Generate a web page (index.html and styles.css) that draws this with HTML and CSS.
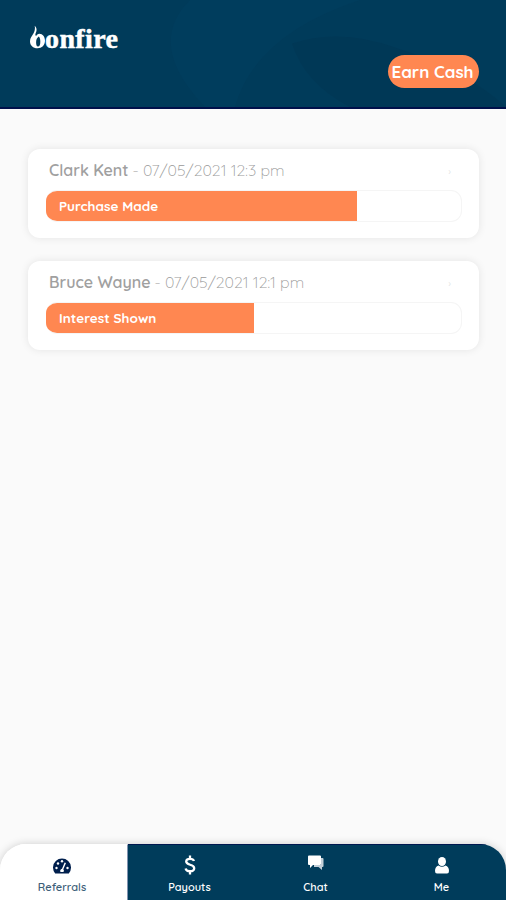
FILE: index.html
```html
<!DOCTYPE html>
<html lang="en">
<head>
  <meta charset="UTF-8">
  <meta name="viewport" content="width=device-width, initial-scale=1">
  <title>Bonfire</title>
  <link rel="stylesheet" href="styles.css">
</head>
<body>
  <header class="header">
    <svg class="header-shape" viewBox="0 0 506 108" preserveAspectRatio="none">
      <path class="shape-light" d="M190 0H360Q255 35 235 108H205Q145 45 190 0Z"/>
      <path class="shape-dark" d="M292 44Q340 28 395 48Q465 70 506 108H350Q305 85 292 44Z"/>
    </svg>
    <div class="logo">
      <svg class="logo-flame" viewBox="0 0 16 24">
        <path fill-rule="evenodd" d="M5 0C8 3 7 6 6 8C5.500 9.500 5.600 10.500 6.500 11C7 9.500 8.500 8.500 10 8.500C13.500 8.500 16 11.600 16 16C16 20.700 12.700 24 8 24C3.200 24 0 21 0 16.500C0 13 2 11 3.500 8.500C5 6 5.800 3 5 0ZM9.200 11.500C8 13 6.500 14 6.500 17.500C6.500 20.500 7.200 22 8.500 22C10.300 22 11 20.500 11 17C11 14 10.500 12.500 9.200 11.500Z"/>
      </svg>
      <span class="logo-text">onfire</span>
    </div>
    <button class="earn-btn"><span>Earn Cash</span></button>
  </header>

  <main class="referrals">
    <div class="card">
      <div class="card-title">
        <p><span class="name">Clark Kent</span><span class="date">- 07/05/2021 12:3 pm</span></p>
        <span class="arrow">›</span>
      </div>
      <div class="progress">
        <div class="progress-fill" style="width: 75%">Purchase Made</div>
      </div>
    </div>

    <div class="card">
      <div class="card-title">
        <p><span class="name">Bruce Wayne</span><span class="date">- 07/05/2021 12:1 pm</span></p>
        <span class="arrow">›</span>
      </div>
      <div class="progress">
        <div class="progress-fill" style="width: 50%">Interest Shown</div>
      </div>
    </div>
  </main>

  <nav class="tabs">
    <a class="tab active">
      <svg class="icon-gauge" viewBox="0 0 18 16">
        <path d="M2.200 15.500A9 9 0 1 1 15.800 15.500Z"/>
        <g class="gauge-marks">
          <circle cx="3.500" cy="10" r="1.200"/>
          <circle cx="5" cy="5.500" r="1.200"/>
          <circle cx="9" cy="3.200" r="1.200"/>
          <circle cx="14.500" cy="10" r="1.200"/>
          <path d="M11.600 4.500L13 5L10.300 11.200A2.200 2.200 0 0 1 10.500 14H7.500A2.200 2.200 0 0 1 9 10.700Z"/>
        </g>
      </svg>
      <span>Referrals</span>
    </a>
    <a class="tab">
      <svg class="icon-dollar" viewBox="0 0 12 20">
        <path d="M10 6C9.500 4.500 8 3.800 6 3.800C3.700 3.800 2.200 4.800 2.200 6.600C2.200 10.800 10.200 8.700 10.200 13.200C10.200 15.100 8.500 16.200 6 16.200C3.700 16.200 2 15.300 1.600 13.400M6 .500V4M6 16V19.500"/>
      </svg>
      <span>Payouts</span>
    </a>
    <a class="tab">
      <svg class="icon-chat" viewBox="0 0 16 16">
        <path class="bubble-back" d="M13 3H14.500Q15.500 3 15.500 4V11Q15.500 12 14.500 12H14V15L10.500 12H6V10H13Z"/>
        <path d="M1 .500H12Q13 .500 13 1.500V9Q13 10 12 10H5L2 13V10H1Q0 10 0 9V1.500Q0 .500 1 .500Z"/>
      </svg>
      <span>Chat</span>
    </a>
    <a class="tab">
      <svg class="icon-user" viewBox="0 0 14 17">
        <ellipse cx="7" cy="4.500" rx="4" ry="4.500"/>
        <path d="M3.500 8.500Q7 11 10.500 8.500Q14 9.500 14 14Q14 16.500 12 16.500H2Q0 16.500 0 14Q0 9.500 3.500 8.500Z"/>
      </svg>
      <span>Me</span>
    </a>
  </nav>
</body>
</html>
```
FILE: styles.css
```css
* {
  box-sizing: border-box;
}
body {
  margin: 0;
  height: 100vh;
  display: flex;
  flex-direction: column;
  font-family: Quicksand, Lato, sans-serif;
  background: #fafafa;
  overflow: hidden;
}
.header {
  position: relative;
  height: 109px;
  padding: 25px 27px 0 30px;
  background: #003b5a;
  border-bottom: 2px solid #00104a;
}
.header-shape {
  position: absolute;
  inset: 0;
  width: 100%;
  height: 100%;
}
.shape-light {
  fill: #003d5d;
}
.shape-dark {
  fill: #003856;
}
.logo {
  position: relative;
  display: flex;
  height: 30px;
  color: #fff;
}
.logo-flame {
  width: 15px;
  height: 24px;
  fill: #fff;
}
.logo-text {
  font: bold 28px/28px "Liberation Serif", serif;
  letter-spacing: 0.4px;
  -webkit-text-stroke: 0.5px #fff;
}
.earn-btn {
  position: relative;
  display: flex;
  align-items: center;
  justify-content: center;
  width: 91px;
  height: 33px;
  margin-left: auto;
  padding: 0 2px 1px 0;
  border: none;
  border-radius: 17px;
  background: #ff8751;
  color: #fff;
  font: bold 17px Quicksand, Lato, sans-serif;
  white-space: nowrap;
}
.referrals {
  flex: 1;
  display: flex;
  flex-direction: column;
  gap: 23px;
  padding: 40px 27px 0 28px;
}
.card {
  height: 89px;
  padding: 12px 17px 0 18px;
  background: #fff;
  border-radius: 12px;
  box-shadow: 0 0 8px rgba(0, 0, 0, 0.09);
}
.card-title {
  display: flex;
  justify-content: space-between;
  height: 20px;
  padding: 0 11px 0 3px;
  font-size: 16px;
  line-height: 19px;
}
.card-title p {
  margin: 0;
  display: flex;
  gap: 4px;
  white-space: nowrap;
}
.name {
  font-weight: 600;
  color: #a0a0a0;
}
.date {
  font-weight: 300;
  color: #999;
}
.arrow {
  font-size: 9px;
  color: #ddd;
}
.progress {
  height: 32px;
  margin-top: 9px;
  border: 1px solid #f5f5f5;
  border-left: none;
  border-radius: 11px;
  overflow: hidden;
}
.progress-fill {
  height: 100%;
  padding-left: 13px;
  background: #ff8751;
  color: #fff;
  font-size: 13.5px;
  font-weight: bold;
  line-height: 30px;
  white-space: nowrap;
}
.tabs {
  display: flex;
  height: 56px;
  border-radius: 26px 26px 0 0;
  box-shadow: 0 0 9px rgba(0, 0, 0, 0.18);
  overflow: hidden;
}
.tab {
  flex: 1;
  display: flex;
  flex-direction: column;
  align-items: center;
  justify-content: space-between;
  padding: 10px 3px 6px 0;
  background: #003c5b;
  border-top: 1px solid #001850;
  color: #fff;
  font-size: 11px;
  font-weight: 600;
  line-height: 14px;
}
.tab svg {
  fill: currentColor;
}
.tab.active {
  flex: 0 0 128px;
  background: #fff;
  border-top-color: #fff;
  border-right: 1px solid #8293b0;
  color: #3d6079;
}
.icon-gauge {
  width: 18px;
  height: 16px;
  margin-top: 3px;
}
.tab .icon-gauge {
  fill: #001f4d;
}
.tab .gauge-marks {
  fill: #fff;
}
.icon-dollar {
  width: 12px;
  height: 20px;
}
.tab .icon-dollar {
  fill: none;
  stroke: #fff;
  stroke-width: 2.3;
}
.icon-chat {
  width: 16px;
  height: 16px;
}
.bubble-back {
  fill: #c3d0d9;
}
.icon-user {
  width: 14px;
  height: 17px;
  margin-top: 2px;
}
```
